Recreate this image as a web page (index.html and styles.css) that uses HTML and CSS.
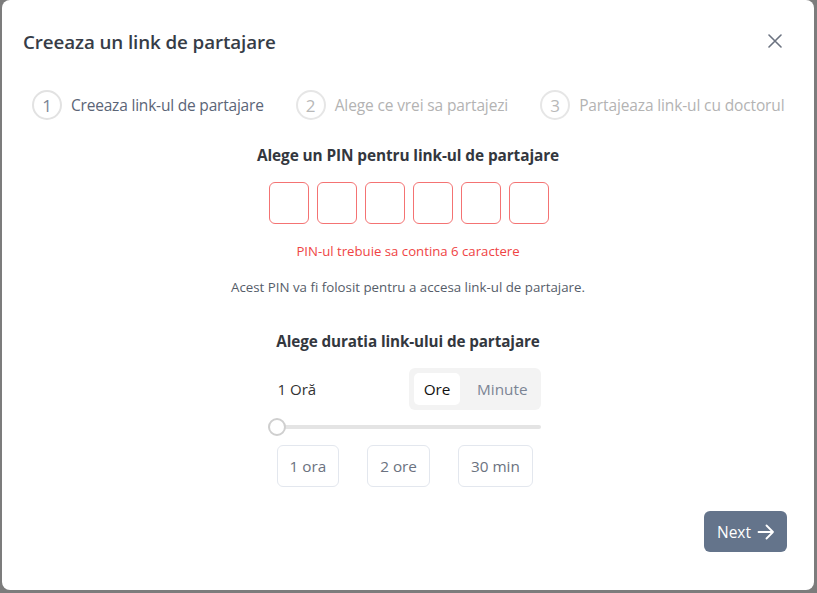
FILE: index.html
```html
<!DOCTYPE html>
<html lang="ro">
<head>
<meta charset="utf-8">
<title>Creeaza un link de partajare</title>
<link rel="stylesheet" href="styles.css">
</head>
<body>
<div class="backdrop">
  <div class="modal">
    <div class="modal-header">
      <h1 class="modal-title">Creeaza un link de partajare</h1>
      <button class="close-btn" aria-label="Inchide">
        <svg width="14" height="14" viewBox="0 0 14 14"><path d="M1 1 L13 13 M13 1 L1 13" stroke="#6b7280" stroke-width="1.6" stroke-linecap="round"/></svg>
      </button>
    </div>

    <div class="stepper">
      <div class="step step-active"><span class="step-circle">1</span><span class="step-label">Creeaza link-ul de partajare</span></div>
      <div class="step"><span class="step-circle">2</span><span class="step-label">Alege ce vrei sa partajezi</span></div>
      <div class="step"><span class="step-circle">3</span><span class="step-label">Partajeaza link-ul cu doctorul</span></div>
    </div>

    <div class="section">
      <h2 class="section-title">Alege un PIN pentru link-ul de partajare</h2>
      <div class="pin-row">
        <input class="pin-box" type="text" maxlength="1">
        <input class="pin-box" type="text" maxlength="1">
        <input class="pin-box" type="text" maxlength="1">
        <input class="pin-box" type="text" maxlength="1">
        <input class="pin-box" type="text" maxlength="1">
        <input class="pin-box" type="text" maxlength="1">
      </div>
      <p class="pin-error">PIN-ul trebuie sa contina 6 caractere</p>
      <p class="pin-help">Acest PIN va fi folosit pentru a accesa link-ul de partajare.</p>

      <h2 class="section-title duration-title">Alege duratia link-ului de partajare</h2>
      <div class="duration">
        <div class="duration-row">
          <span class="duration-value">1 Oră</span>
          <div class="segmented">
            <span class="seg seg-active">Ore</span>
            <span class="seg">Minute</span>
          </div>
        </div>
        <div class="slider">
          <div class="slider-track"></div>
          <div class="slider-thumb"></div>
        </div>
        <div class="presets">
          <button class="preset">1 ora</button>
          <button class="preset">2 ore</button>
          <button class="preset">30 min</button>
        </div>
      </div>
    </div>

    <div class="modal-footer">
      <button class="next-btn">Next
        <svg width="18" height="16" viewBox="0 0 18 16"><path d="M1.5 8 H16 M9.5 1.5 L16 8 L9.5 14.5" fill="none" stroke="#ffffff" stroke-width="1.8" stroke-linecap="round" stroke-linejoin="round"/></svg>
      </button>
    </div>
  </div>
</div>
</body>
</html>
```

FILE: styles.css
```css
* { box-sizing: border-box; }

html, body {
  margin: 0;
  padding: 0;
}

body {
  width: 817px;
  height: 593px;
  overflow: hidden;
  background: #7c7c7c;
  font-family: "Open Sans", "Noto Sans", Arial, sans-serif;
}

.backdrop {
  padding-left: 2px;
}

.modal {
  width: 812px;
  height: 590px;
  background: #ffffff;
  border-radius: 8px;
  display: flex;
  flex-direction: column;
}

.modal-header {
  display: flex;
  align-items: center;
  justify-content: space-between;
  padding: 28px 32px 0 21px;
}

.modal-title {
  margin: 0;
  font-size: 18.8px;
  line-height: 28px;
  font-weight: 600;
  color: #363c47;
  letter-spacing: -0.1px;
}

.close-btn {
  border: 0;
  background: none;
  padding: 0;
  width: 14px;
  height: 14px;
  display: flex;
  margin-top: -2px;
}

.stepper {
  display: flex;
  align-items: center;
  gap: 32px;
  padding-left: 30px;
  margin-top: 34px;
}

.step {
  display: flex;
  align-items: center;
  gap: 9px;
}

.step-circle {
  width: 30px;
  height: 30px;
  border-radius: 50%;
  border: 2px solid #e6e6e6;
  display: flex;
  align-items: center;
  justify-content: center;
  font-size: 17px;
  color: #b8b8b8;
}

.step-label {
  font-size: 15.5px;
  color: #b3b3b3;
  letter-spacing: -0.13px;
}

.step-active .step-label { letter-spacing: -0.2px; }
.step-active .step-circle { color: #7c8595; border-color: #e2e2e2; }
.step-active .step-label { color: #5b6577; }

.section {
  display: flex;
  flex-direction: column;
  align-items: center;
  margin-top: 25px;
}

.section-title {
  margin: 0;
  font-size: 15.4px;
  line-height: 22px;
  font-weight: 700;
  color: #33373e;
  letter-spacing: -0.1px;
}

.pin-row {
  display: flex;
  gap: 8px;
  margin-top: 15px;
  margin-left: 2px;
}

.pin-box {
  width: 40px;
  height: 42px;
  border: 1px solid #f47373;
  border-radius: 6px;
  background: #fff;
  padding: 0;
  outline: none;
}

.pin-error {
  margin: 18px 0 0;
  font-size: 13.2px;
  line-height: 18px;
  color: #ef4444;
}

.pin-help {
  margin: 18px 0 0;
  font-size: 13.3px;
  line-height: 18px;
  color: #555d69;
}

.duration-title {
  margin-top: 34px;
  font-size: 15.25px;
}

.duration {
  width: 273px;
  margin-left: -8px;
  margin-top: 16px;
}

.duration-row {
  display: flex;
  align-items: center;
  justify-content: space-between;
  padding-left: 10px;
}

.duration-value {
  font-size: 15px;
  color: #333;
}

.segmented {
  display: flex;
  background: #f3f3f3;
  border-radius: 6px;
  padding: 5px 6px 5px 5px;
  gap: 10px;
  height: 42px;
}

.seg {
  display: flex;
  align-items: center;
  justify-content: center;
  font-size: 15.3px;
  color: #7b8494;
  padding: 0 7px;
}

.seg-active {
  background: #ffffff;
  color: #111;
  border-radius: 5px;
  width: 46px;
  padding: 0;
}

.slider {
  position: relative;
  height: 18px;
  margin-top: 8px;
}

.slider-track {
  position: absolute;
  left: 0;
  right: 0;
  top: 7px;
  height: 4px;
  background: #e4e4e4;
  border-radius: 2px;
}

.slider-thumb {
  position: absolute;
  left: 0;
  top: 0;
  width: 18px;
  height: 18px;
  border-radius: 50%;
  background: #fff;
  border: 2px solid #cfcfcf;
}

.presets {
  display: flex;
  gap: 28px;
  padding-left: 9px;
  margin-top: 9px;
}

.preset {
  height: 42px;
  padding: 0 12px;
  border: 1px solid #e3e7ee;
  border-radius: 6px;
  background: #fff;
  font-family: inherit;
  font-size: 15.3px;
  color: #6b7280;
}

.modal-footer {
  display: flex;
  justify-content: flex-end;
  padding-right: 27px;
  margin-top: 24px;
}

.next-btn {
  display: flex;
  align-items: center;
  gap: 6px;
  height: 41px;
  padding: 0 12px 0 13px;
  background: #64748b;
  border: 0;
  border-radius: 6px;
  color: #ffffff;
  font-family: inherit;
  font-size: 15.5px;
}
```
